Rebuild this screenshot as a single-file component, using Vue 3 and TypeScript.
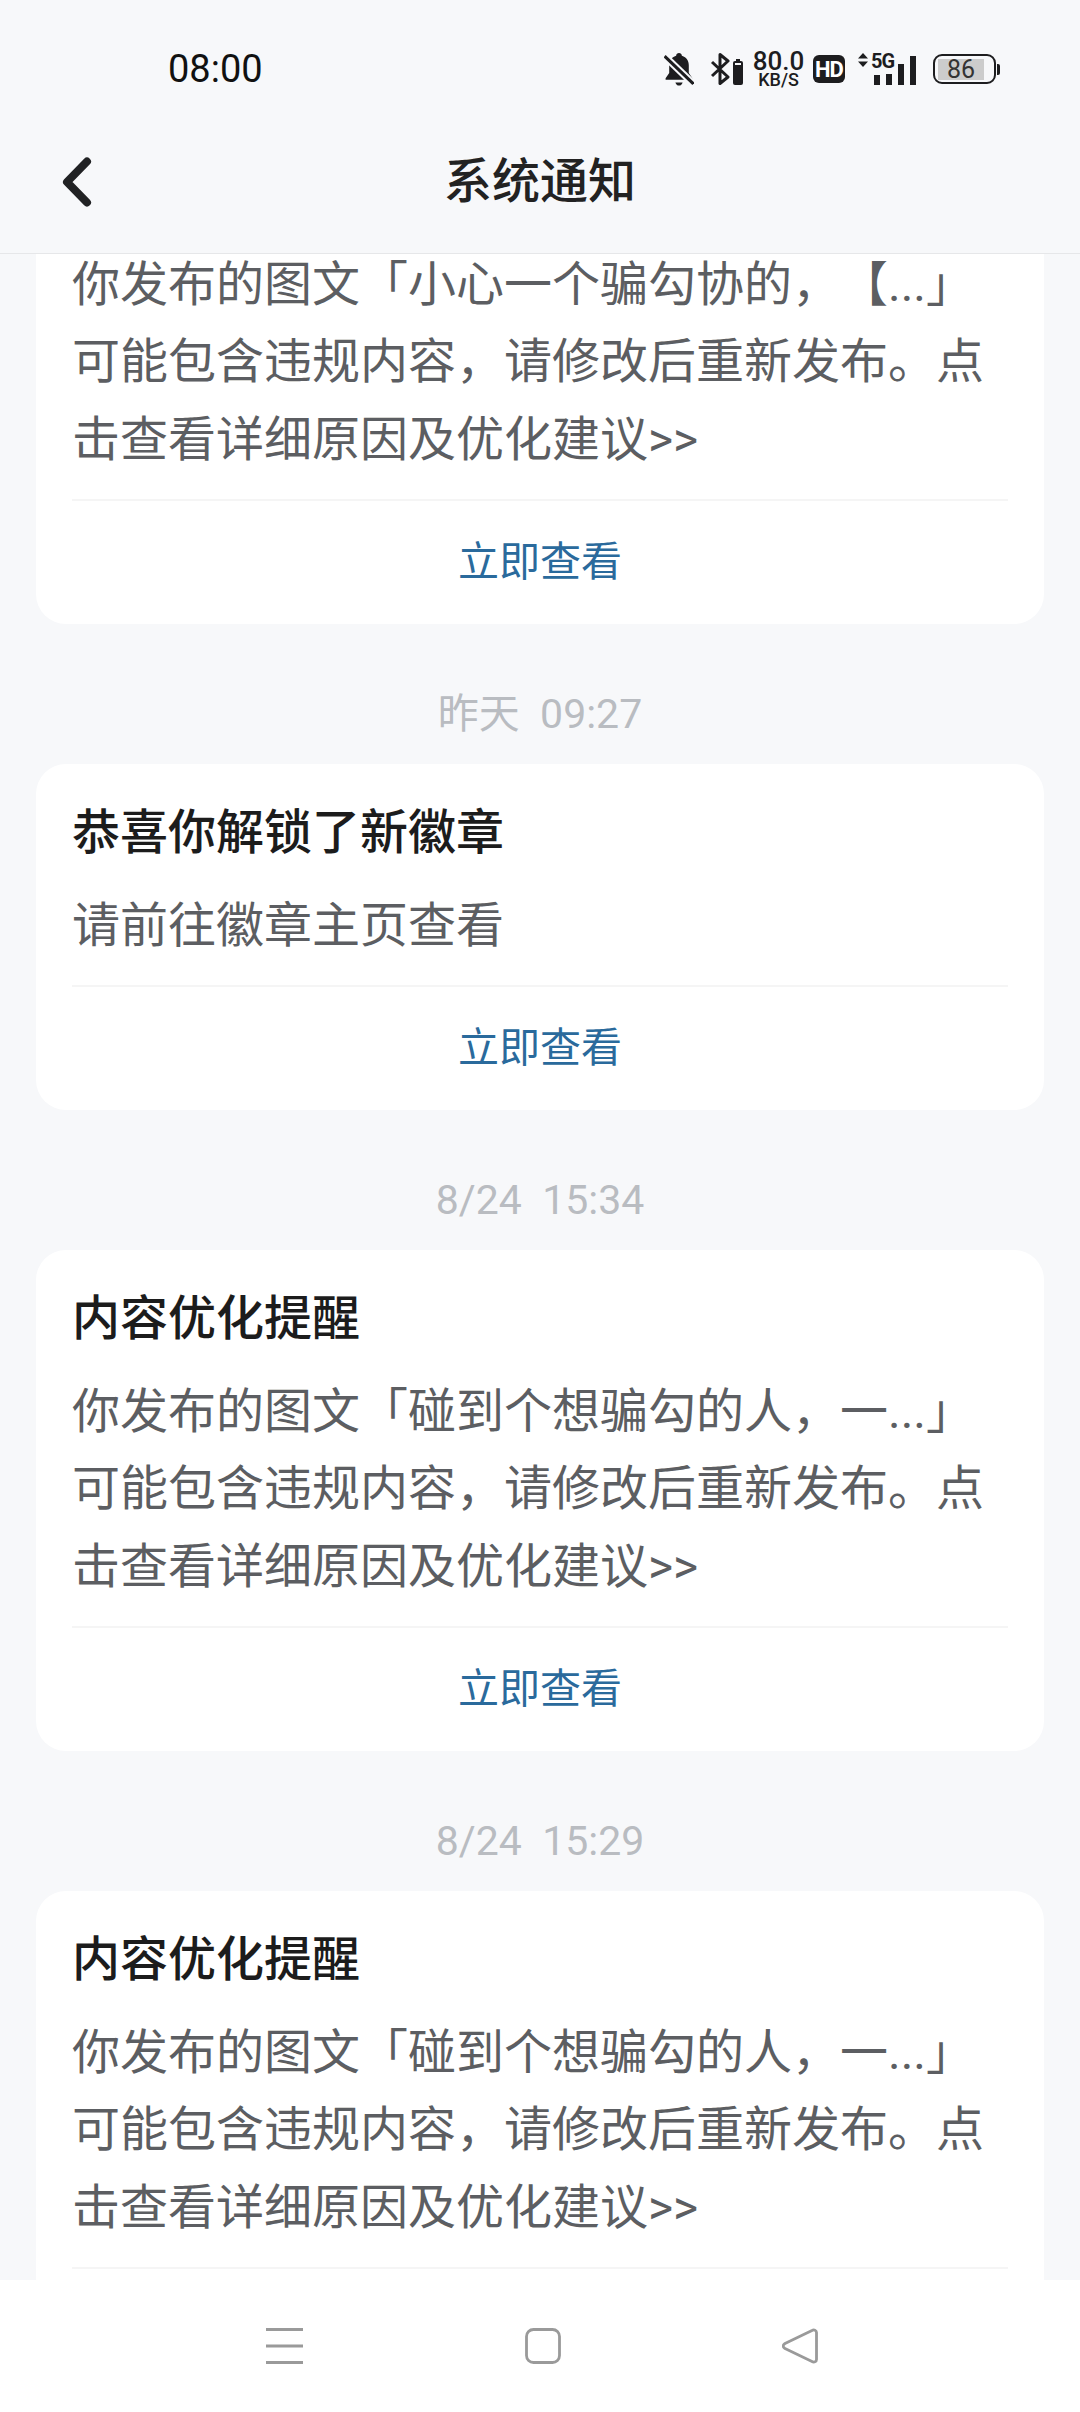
<template>
  <div class="page">
    <header class="top">
      <div class="status">
        <span class="clock">08:00</span>
        <div class="status-icons">
          <svg class="ic-bell" width="30" height="33" viewBox="2 1 28 32">
            <path d="M16 1c-1.6 0-2.6 1-2.8 2.6C8.600 5 6.500 8.500 6.500 13v7.500L3 25.500V27h26v-1.500l-3.500-5V13c0-4.500-2.100-8-6.700-9.400C18.600 2 17.600 1 16 1z" fill="#1d1d1f" />
            <path d="M12.500 29.500h7c-.5 2-1.800 3-3.500 3s-3-1-3.500-3z" fill="#1d1d1f" />
            <path d="M2 4l28 27" stroke="#f7f8fa" stroke-width="7" />
            <path d="M2 4l28 27" stroke="#1d1d1f" stroke-width="3" />
          </svg>
          <div class="bt">
            <svg width="21" height="32" viewBox="0 0 21 32">
              <path d="M2 9l16 15-8 6.500V1.500l8 6.500L2 23" fill="none" stroke="#1d1d1f" stroke-width="3" stroke-linejoin="round" />
            </svg>
            <svg width="10" height="26" viewBox="0 0 10 26">
              <rect x="3" y="0" width="4" height="3" fill="#1d1d1f" />
              <rect x="0" y="2" width="10" height="24" rx="2" fill="#1d1d1f" />
              <rect x="2" y="4" width="6" height="2" fill="#f7f8fa" />
            </svg>
          </div>
          <div class="speed">
            <span class="speed-num">80.0</span>
            <span class="speed-unit">KB/S</span>
          </div>
          <span class="hd">HD</span>
          <div class="signal">
            <svg class="arrows" width="10" height="14" viewBox="0 0 10 14">
              <path d="M5 0l5 5.500H0zM5 14L0 8.500h10z" fill="#1d1d1f" />
            </svg>
            <span class="five-g">5G</span>
            <div class="bars">
              <i style="height: 10px"></i>
              <i style="height: 11px"></i>
              <i style="height: 21px"></i>
              <i style="height: 29px"></i>
            </div>
          </div>
          <div class="battery">
            <div class="battery-body">
              <span class="battery-num">86</span>
            </div>
            <i class="battery-nub"></i>
          </div>
        </div>
      </div>
      <div class="title-bar">
        <svg class="back" width="32" height="50" viewBox="0 0 32 50">
          <path d="M26 4.500L6 25l20 20.500" fill="none" stroke="#212224" stroke-width="8" stroke-linecap="round" stroke-linejoin="round" />
        </svg>
        <h1>系统通知</h1>
      </div>
    </header>

    <main class="list">
      <div class="feed">
        <template v-for="(item, i) in items" :key="i">
          <div v-if="item.time" class="time">{{ item.time }}</div>
          <section class="card">
            <h2 v-if="item.title">{{ item.title }}</h2>
            <p v-for="line in item.lines" :key="line">{{ line }}</p>
            <div class="action">
              <span v-if="!item.cutOff">立即查看</span>
            </div>
          </section>
        </template>
      </div>
    </main>

    <nav class="nav">
      <svg width="37" height="36" viewBox="0 0 37 36">
        <path d="M0 1.500h37M0 18h37M0 34.500h37" stroke="#9a9a9a" stroke-width="3" />
      </svg>
      <svg width="36" height="36" viewBox="0 0 36 36">
        <rect x="1.500" y="1.500" width="33" height="33" rx="7" fill="none" stroke="#9a9a9a" stroke-width="2.800" />
      </svg>
      <svg width="36" height="36" viewBox="0 0 36 36">
        <path d="M30 2.500c2-1.200 4.500-.3 4.500 2v27c0 2.300-2.500 3.200-4.500 2L3 20.500c-2.500-1.600-2.500-3.400 0-5z" fill="none" stroke="#9a9a9a" stroke-width="2.800" stroke-linejoin="round" />
      </svg>
    </nav>
  </div>
</template>

<script setup lang="ts">
interface Notice {
  time?: string
  title?: string
  lines: string[]
  cutOff?: boolean
}

const tail = ['可能包含违规内容，请修改后重新发布。点', '击查看详细原因及优化建议>>']

const items: Notice[] = [
  { lines: ['你发布的图文「小心一个骗勾协的，【...」', ...tail] },
  { time: '昨天  09:27', title: '恭喜你解锁了新徽章', lines: ['请前往徽章主页查看'] },
  { time: '8/24  15:34', title: '内容优化提醒', lines: ['你发布的图文「碰到个想骗勾的人，一...」', ...tail] },
  { time: '8/24  15:29', title: '内容优化提醒', lines: ['你发布的图文「碰到个想骗勾的人，一...」', ...tail], cutOff: true },
]
</script>

<style>
html,
body {
  margin: 0;
  background: #f7f8fa;
}
</style>

<style scoped>
.page {
  display: flex;
  flex-direction: column;
  width: 1080px;
  height: 2412px;
  overflow: hidden;
  background: #f7f8fa;
  font-family: Roboto, "Noto Sans CJK SC", sans-serif;
  text-spacing-trim: space-all;
}

.top {
  height: 254px;
  flex: none;
  box-sizing: border-box;
  border-bottom: 1px solid #e6e7e9;
}

.status {
  display: flex;
  align-items: center;
  height: 110px;
  padding: 28px 80px 0 168px;
  box-sizing: border-box;
  color: #1d1d1f;
}

.clock {
  font-size: 38px;
  color: #111;
}

.status-icons {
  display: flex;
  align-items: center;
  margin-left: auto;
}

.ic-bell {
  margin-right: 16px;
}

.bt {
  display: flex;
  align-items: flex-end;
  gap: 2px;
  margin-right: 10px;
}

.speed {
  display: flex;
  flex-direction: column;
  align-items: center;
  width: 51px;
  margin-right: 9px;
}

.speed-num {
  font-size: 26px;
  font-weight: 500;
  line-height: 21px;
}

.speed-unit {
  font-size: 18px;
  font-weight: 500;
  line-height: 15px;
}

.hd {
  display: flex;
  align-items: center;
  justify-content: center;
  width: 32px;
  height: 28px;
  margin-right: 13px;
  border-radius: 6px;
  background: #1d1d1f;
  color: #fff;
  font-size: 22px;
  font-weight: 700;
  letter-spacing: -1px;
}

.signal {
  position: relative;
  display: flex;
  align-items: flex-end;
  justify-content: flex-end;
  width: 58px;
  height: 32px;
  margin-right: 17px;
}

.arrows {
  position: absolute;
  left: 0;
  top: 0;
}

.five-g {
  position: absolute;
  left: 13px;
  top: -1px;
  font-size: 20px;
  font-weight: 700;
  letter-spacing: -1px;
  line-height: 18px;
}

.bars {
  display: flex;
  align-items: flex-end;
  gap: 6px;
}

.bars i {
  display: block;
  width: 6px;
  background: #1d1d1f;
}

.battery {
  display: flex;
  align-items: center;
  gap: 1px;
}

.battery-body {
  width: 63px;
  height: 30px;
  box-sizing: border-box;
  border: 2px solid #1d1d1f;
  border-radius: 9px;
  padding: 2.500px 3px;
}

.battery-num {
  display: block;
  width: 46px;
  height: 21px;
  background: #cccccc;
  text-align: center;
  font-size: 25px;
  line-height: 21px;
  color: #333;
}

.battery-nub {
  display: block;
  width: 3px;
  height: 11px;
  border-radius: 0 2px 2px 0;
  background: #1d1d1f;
}

.title-bar {
  position: relative;
  display: flex;
  align-items: center;
  justify-content: center;
  height: 144px;
}

.back {
  position: absolute;
  left: 61px;
  top: 47px;
}

h1 {
  margin: 0;
  font-size: 48px;
  font-weight: 500;
  color: #222;
  line-height: 60px;
}

.list {
  flex: 1;
  min-height: 0;
  overflow: hidden;
}

.feed {
  margin-top: -38.500px;
}

.time {
  padding-top: 65px;
  padding-bottom: 25px;
  text-align: center;
  font-size: 41px;
  line-height: 50px;
  color: #b9bcc1;
  white-space: pre;
}

.card {
  margin: 0 36px;
  padding: 30px 36px 0;
  border-radius: 30px;
  background: #fff;
}

h2 {
  margin: 0 0 15px;
  font-size: 48px;
  font-weight: 500;
  line-height: 78px;
  color: #1c1c1c;
}

p {
  margin: 0;
  font-size: 48px;
  line-height: 77.500px;
  color: #5c5e62;
  white-space: nowrap;
}

.action {
  margin-top: 21px;
  border-top: 2px solid #f5f5f5;
  height: 122.500px;
  line-height: 122.500px;
  text-align: center;
  font-size: 41px;
  color: #2a6a9c;
}

.nav {
  display: flex;
  align-items: center;
  justify-content: space-between;
  height: 132px;
  flex: none;
  box-sizing: border-box;
  padding: 0 262px 0 266px;
  background: #fff;
}
</style>
